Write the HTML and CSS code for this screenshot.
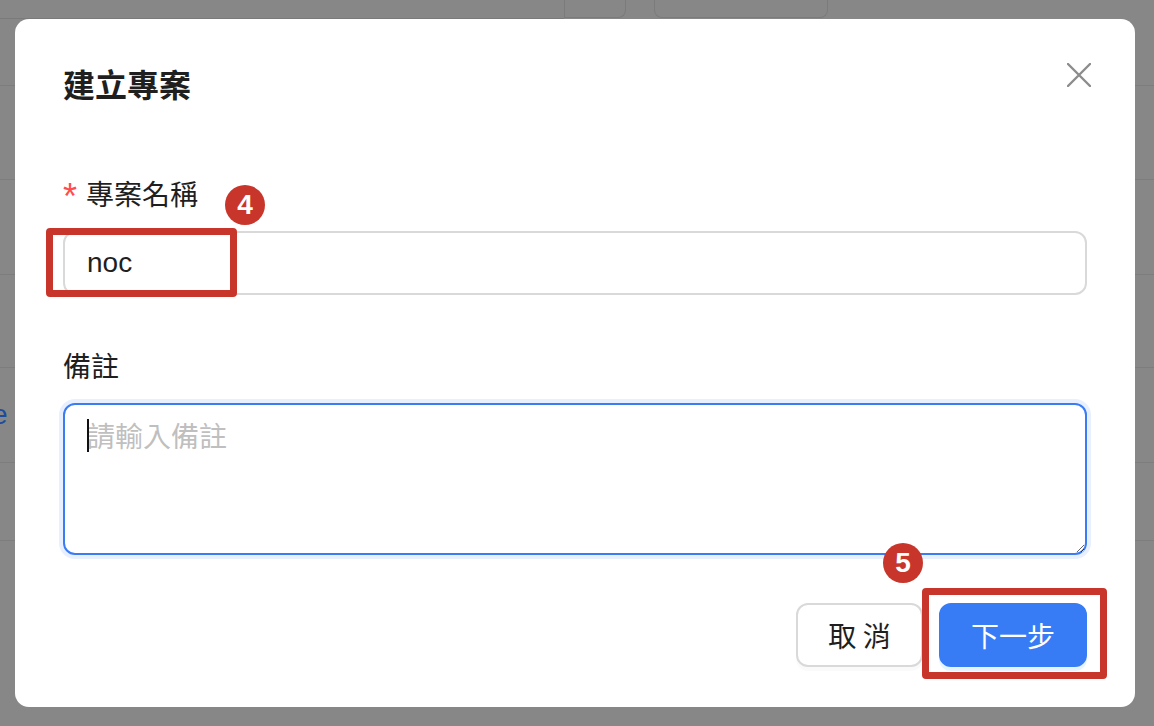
FILE: index.html
```html
<!DOCTYPE html>
<html lang="zh-Hant">
<head>
<meta charset="utf-8">
<title>建立專案</title>
<link rel="stylesheet" href="styles.css">
</head>
<body>
<div class="page">
  <div class="backdrop">
    <div class="bg-head">
      <div class="bg-head-fill"></div>
      <div class="bg-btn bg-btn-a"></div>
      <div class="bg-gap"></div>
      <div class="bg-btn bg-btn-b"></div>
      <div class="bg-head-rest"></div>
    </div>
    <div class="bg-row r1"></div>
    <div class="bg-row r2"></div>
    <div class="bg-row r3"></div>
    <div class="bg-row r4"></div>
    <div class="bg-row r5"><span class="bg-link">e</span></div>
    <div class="bg-row r6"></div>
    <div class="bg-row r7"></div>
  </div>

  <div class="modal">
    <h2 class="modal-title">建立專案</h2>
    <button class="modal-close" type="button" aria-label="close">
      <svg width="24" height="24" viewBox="0 0 24 24"><path d="M1 1 L23 23 M23 1 L1 23" stroke="#8c8c8c" stroke-width="2.4" stroke-linecap="round" fill="none"/></svg>
    </button>

    <div class="form-item first">
      <label class="form-label"><span class="req">*</span><span>專案名稱</span></label>
      <input class="text-input" type="text" value="noc">
    </div>

    <div class="form-item">
      <label class="form-label"><span>備註</span></label>
      <div class="textarea-wrap">
        <textarea class="text-area" placeholder="請輸入備註"></textarea>
        <span class="caret"></span>
      </div>
    </div>

    <div class="modal-footer">
      <button class="btn btn-default" type="button">取 消</button>
      <button class="btn btn-primary" type="button">下一步</button>
    </div>

    <div class="mark mark-1"></div>
    <div class="badge badge-4">4</div>
    <div class="mark mark-2"></div>
    <div class="badge badge-5">5</div>
  </div>
</div>
</body>
</html>
```

FILE: styles.css
```css
* { box-sizing: border-box; }

html, body {
  margin: 0;
  padding: 0;
}

body {
  width: 1154px;
  height: 726px;
  overflow: hidden;
  background: #878787;
  font-family: "Liberation Sans", "Noto Sans CJK TC", sans-serif;
}

.page {
  position: relative;
  width: 1154px;
  height: 726px;
}

/* ---------- dimmed page behind the modal ---------- */
.backdrop {
  display: flex;
  flex-direction: column;
  width: 100%;
  height: 100%;
  background: #878787;
}

.bg-head {
  display: flex;
  height: 19px;
  flex: none;
}

.bg-head-fill {
  width: 564px;
  border-bottom: 1px solid #7a7a7a;
}

.bg-btn {
  border: 1px solid #7b7b7b;
  border-top: none;
  height: 18px;
}

.bg-btn-a {
  width: 62px;
  border-radius: 0 0 8px 0;
}

.bg-gap { width: 28px; }

.bg-btn-b {
  width: 174px;
  border-radius: 0 0 8px 8px;
}

.bg-head-rest { flex: 1; }

.bg-row {
  flex: none;
  border-bottom: 1px solid #7d7d7d;
  display: flex;
  align-items: center;
}

.r1 { height: 67px; }
.r2 { height: 94px; }
.r3 { height: 95px; }
.r4 { height: 93px; }
.r5 { height: 95px; }
.r6 { height: 78px; }
.r7 { flex: 1; border-bottom: none; }

.bg-link {
  margin-left: -8px;
  font-size: 28px;
  color: #1d4c9e;
  line-height: 1;
}

/* ---------- modal ---------- */
.modal {
  position: absolute;
  left: 15px;
  top: 19px;
  width: 1120px;
  height: 688px;
  background: #ffffff;
  border-radius: 14px;
  padding: 40px 48px;
}

.modal-title {
  margin: 0;
  font-family: "Noto Sans CJK TC", sans-serif;
  font-size: 32px;
  font-weight: 700;
  line-height: 48px;
  color: #1f1f1f;
}

.modal-close {
  position: absolute;
  left: 1052px;
  top: 44px;
  width: 24px;
  height: 24px;
  padding: 0;
  border: none;
  background: transparent;
  display: flex;
}

.form-item {
  display: flex;
  flex-direction: column;
  gap: 16px;
  margin-top: 48px;
}

.form-item.first { margin-top: 64px; }

.form-label {
  display: flex;
  align-items: center;
  height: 44px;
  font-family: "Noto Sans CJK TC", sans-serif;
  font-size: 28px;
  line-height: 44px;
  color: #1f1f1f;
}

.req {
  display: block;
  width: 23px;
  height: 44px;
  padding-top: 4px;
  font-family: "Liberation Sans", sans-serif;
  font-size: 36px;
  line-height: 44px;
  color: #ff4d4f;
}

.text-input {
  width: 1024px;
  height: 64px;
  border: 2px solid #d9d9d9;
  border-radius: 12px;
  padding: 8px 22px;
  font-family: "Liberation Sans", "Noto Sans CJK TC", sans-serif;
  font-size: 28px;
  line-height: 44px;
  color: #1f1f1f;
  outline: none;
  background: #fff;
}

.textarea-wrap {
  position: relative;
  width: 1024px;
  height: 152px;
}

.text-area {
  display: block;
  width: 1024px;
  height: 152px;
  border: 2px solid #3b7cf5;
  border-radius: 12px;
  box-shadow: 0 0 0 4px #e8f0fe;
  padding: 8px 22px;
  font-family: "Noto Sans CJK TC", sans-serif;
  font-size: 28px;
  line-height: 44px;
  color: #1f1f1f;
  outline: none;
  resize: vertical;
  background: #fff;
}

.text-area::placeholder {
  color: #bfbfbf;
}

.caret {
  position: absolute;
  left: 24px;
  top: 16px;
  width: 2px;
  height: 33px;
  background: #111;
}

.modal-footer {
  display: flex;
  justify-content: flex-end;
  gap: 16px;
  margin-top: 48px;
}

.btn {
  height: 64px;
  padding: 0 30px;
  border-radius: 12px;
  font-family: "Noto Sans CJK TC", sans-serif;
  font-size: 28px;
  line-height: 44px;
  cursor: pointer;
}

.btn-default {
  width: 127px;
  border: 2px solid #d9d9d9;
  background: #fff;
  color: #1f1f1f;
  box-shadow: 0 4px 0 rgba(0, 0, 0, 0.02);
}

.btn-primary {
  width: 148px;
  border: 2px solid #377cf5;
  background: #377cf5;
  color: #fff;
  box-shadow: 0 4px 0 rgba(5, 145, 255, 0.1);
}

/* ---------- annotation overlays ---------- */
.mark {
  position: absolute;
  border: 7px solid #c8362b;
  border-radius: 4px;
}

.mark-1 {
  left: 31px;
  top: 209px;
  width: 191px;
  height: 69px;
}

.mark-2 {
  left: 907px;
  top: 569px;
  width: 185px;
  height: 91px;
}

.badge {
  position: absolute;
  width: 40px;
  height: 40px;
  border-radius: 50%;
  background: #c8362b;
  color: #fff;
  font-family: "Liberation Sans", sans-serif;
  font-weight: 700;
  font-size: 28px;
  display: flex;
  align-items: center;
  justify-content: center;
}

.badge-4 { left: 210px; top: 166px; }
.badge-5 { left: 868px; top: 524px; }
```
